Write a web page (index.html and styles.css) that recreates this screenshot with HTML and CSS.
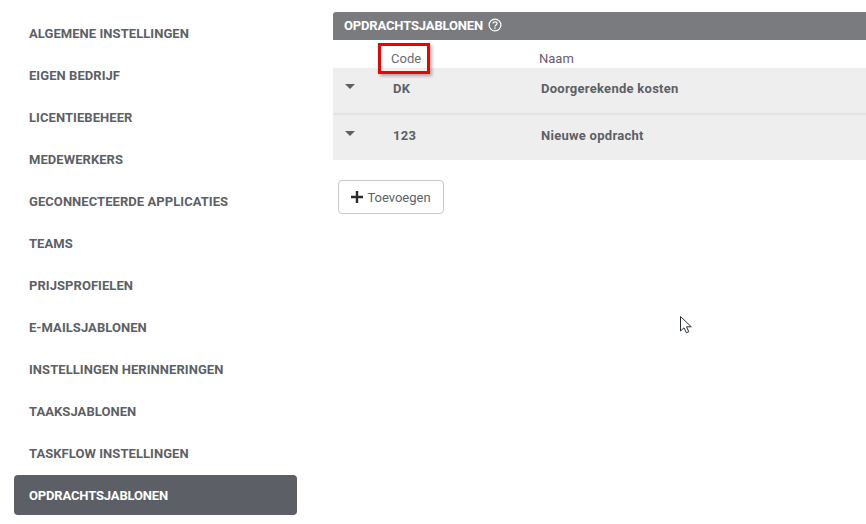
FILE: index.html
```html
<!DOCTYPE html>
<html lang="nl">
<head>
<meta charset="utf-8">
<title>Opdrachtsjablonen</title>
<link rel="stylesheet" href="styles.css">
</head>
<body>
<div class="page">
  <nav class="side">
    <a class="item">ALGEMENE INSTELLINGEN</a>
    <a class="item">EIGEN BEDRIJF</a>
    <a class="item">LICENTIEBEHEER</a>
    <a class="item">MEDEWERKERS</a>
    <a class="item">GECONNECTEERDE APPLICATIES</a>
    <a class="item">TEAMS</a>
    <a class="item">PRIJSPROFIELEN</a>
    <a class="item">E-MAILSJABLONEN</a>
    <a class="item">INSTELLINGEN HERINNERINGEN</a>
    <a class="item">TAAKSJABLONEN</a>
    <a class="item">TASKFLOW INSTELLINGEN</a>
    <a class="item active">OPDRACHTSJABLONEN</a>
  </nav>
  <main class="main">
    <header class="bar">
      <span>OPDRACHTSJABLONEN</span>
      <svg class="help" viewBox="0 0 14 14" width="14" height="14"><circle cx="7" cy="7" r="5.9" fill="none" stroke="#fff" stroke-width="1.2"/><path d="M5 5.6c0-1.1.9-1.8 2-1.8s2 .7 2 1.7c0 1.4-2 1.4-2 2.9" fill="none" stroke="#fff" stroke-width="1.2"/><rect x="6.3" y="9.4" width="1.4" height="1.4" fill="#fff"/></svg>
    </header>
    <div class="head">
      <span class="col-code"><span class="mark">Code</span></span>
      <span class="col-name">Naam</span>
    </div>
    <div class="row">
      <span class="caret"></span>
      <span class="cell-code">DK</span>
      <span class="cell-name">Doorgerekende kosten</span>
    </div>
    <div class="row">
      <span class="caret"></span>
      <span class="cell-code">123</span>
      <span class="cell-name">Nieuwe opdracht</span>
    </div>
    <button class="btn" type="button">
      <svg viewBox="0 0 12 12" width="12" height="12"><path d="M6 0v12M0 6h12" stroke="#2b2b2b" stroke-width="2.4" fill="none"/></svg>
      <span>Toevoegen</span>
    </button>
  </main>
</div>
<svg class="cursor" viewBox="0 0 14 20" width="14" height="20"><path d="M1.5 1.5v14.5l3.5-3.2 2.4 5 2.4-1.1-2.3-4.9h4.8z" fill="#fff" stroke="#2a3038" stroke-width="1"/></svg>
</body>
</html>
```
FILE: styles.css
```css
html, body {
  margin: 0;
  padding: 0;
  background: #fff;
  overflow: hidden;
}
body {
  width: 866px;
  height: 524px;
  position: relative;
  font-family: "Roboto", "Noto Sans", sans-serif;
  color: #5d5f66;
}
.page {
  display: flex;
  align-items: flex-start;
  padding-top: 12px;
}
.side {
  width: 283px;
  margin-left: 14px;
  margin-right: 36px;
  padding-top: 1px;
  display: flex;
  flex-direction: column;
  gap: 2px;
}
.item {
  height: 40px;
  line-height: 41px;
  padding-left: 15px;
  font-size: 13px;
  font-weight: 700;
  letter-spacing: .06px;
  color: #5d5f66;
  border-radius: 4px;
  white-space: nowrap;
}
.item.active {
  background: #5d5f66;
  color: #fff;
  letter-spacing: -.15px;
}
.main {
  flex: 1;
  min-width: 0;
}
.bar {
  height: 28px;
  box-sizing: border-box;
  padding: 0 0 2px 11px;
  background: #797b7f;
  border-top-left-radius: 3px;
  color: #fff;
  font-size: 13px;
  font-weight: 700;
  letter-spacing: -.15px;
  display: flex;
  align-items: center;
  gap: 5px;
}
.help { display: block; }
.head {
  height: 28px;
  display: flex;
  align-items: flex-end;
  font-size: 13px;
  color: #6a6c72;
}
.col-code {
  width: 206px;
  padding-left: 58px;
  box-sizing: border-box;
  position: relative;
  line-height: 18px;
}
.mark {
  position: relative;
  display: inline-block;
}
.mark::after {
  content: "";
  position: absolute;
  left: -13px;
  top: -7px;
  width: 46px;
  height: 25px;
  border: 3px solid #f00000;
  box-shadow: 2px 2px 3px rgba(0,0,0,.3);
}
.col-name {
  line-height: 18px;
  color: #6d5a6a;
}
.row {
  height: 45px;
  background: #eee;
  display: flex;
  align-items: flex-start;
  font-size: 13px;
  font-weight: 700;
  letter-spacing: .27px;
  color: #5d5f66;
  line-height: 41px;
}
.row + .row {
  border-top: 2px solid #e2e2e2;
}
.caret {
  width: 0;
  height: 0;
  margin: 16px 0 0 12px;
  border-left: 5px solid transparent;
  border-right: 5px solid transparent;
  border-top: 5px solid #5d5f66;
}
.cell-code {
  width: 148px;
  margin-left: 38px;
}
.btn {
  margin: 20px 0 0 5px;
  width: 106px;
  height: 34px;
  background: #fff;
  border: 1px solid #c8c8c8;
  border-radius: 4px;
  display: flex;
  align-items: center;
  justify-content: center;
  gap: 4px;
  padding: 0;
  font-family: inherit;
  font-size: 13px;
  color: #5d5f66;
}
.cursor {
  position: absolute;
  left: 679px;
  top: 315px;
}
```
